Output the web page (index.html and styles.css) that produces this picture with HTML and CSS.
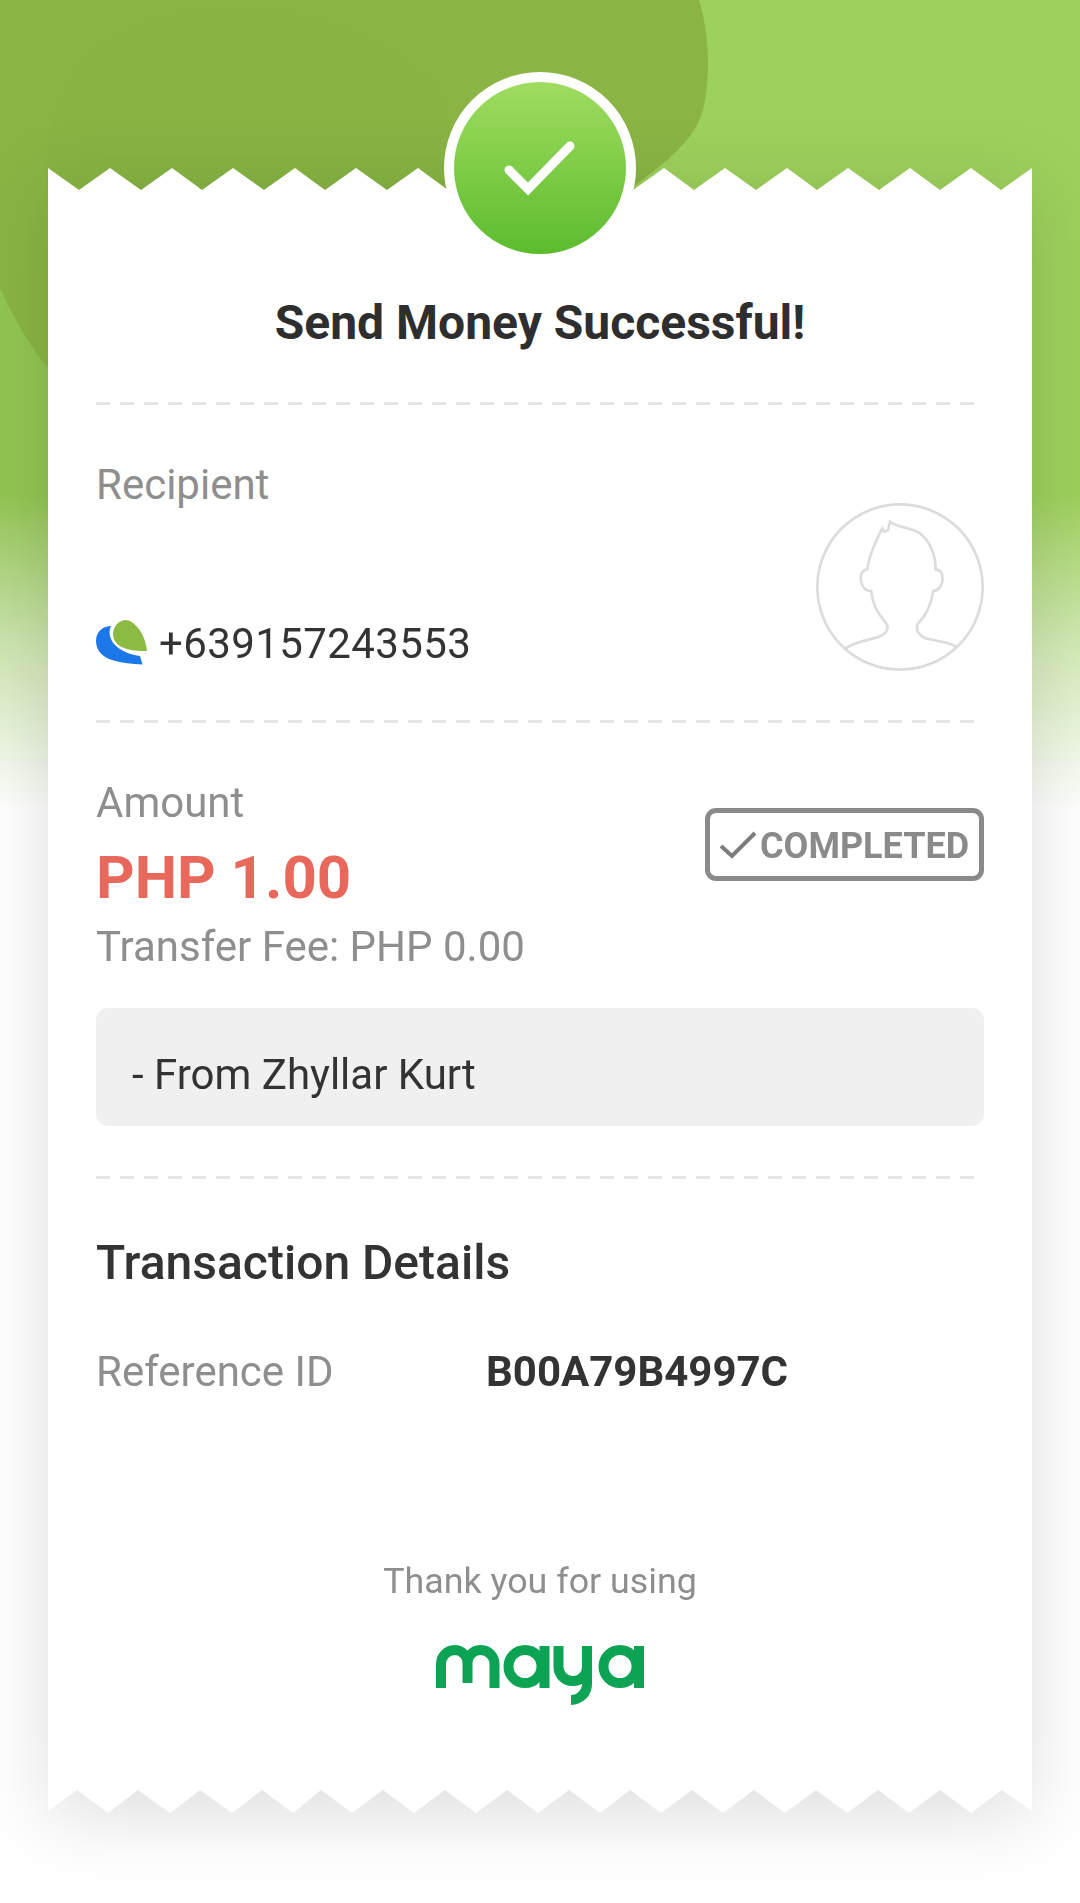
FILE: index.html
```html
<!DOCTYPE html>
<html lang="en">
<head>
<meta charset="utf-8">
<title>Send Money Successful</title>
<link rel="stylesheet" href="styles.css">
</head>
<body>
<main class="page">
  <svg class="backdrop" viewBox="0 0 1080 900" aria-hidden="true">
    <defs>
      <linearGradient id="fade" x1="0" y1="0" x2="0" y2="1">
        <stop offset="0" stop-color="#fff" stop-opacity="0"/>
        <stop offset="0.55" stop-color="#fff" stop-opacity="0"/>
        <stop offset="0.72" stop-color="#fff" stop-opacity="0.55"/>
        <stop offset="0.9" stop-color="#fff" stop-opacity="1"/>
        <stop offset="1" stop-color="#fff" stop-opacity="1"/>
      </linearGradient>
    </defs>
    <rect width="1080" height="900" fill="#9dd05c"/>
    <path d="M0 280H60V900H0Z" fill="#92c552"/>
    <path d="M0 0H699C708 30 712 70 703 110C693 145 660 165 630 190L300 500L48 368C25 340 10 310 0 288Z" fill="#8ab544"/>
    <path d="M46 168C50 110 70 60 110 38C150 15 220 4 270 10C330 18 390 40 440 90L470 200H46Z" fill="#87b443"/>
    <rect width="1080" height="900" fill="url(#fade)"/>
  </svg>

  <div class="receipt-wrap">
    <div class="receipt-shadow">
      <section class="receipt">
        <h1 class="title">Send Money Successful!</h1>
        <div class="dash"></div>

        <div class="recipient">
          <div class="recipient-text">
            <div class="label">Recipient</div>
            <div class="phone-row">
              <svg class="wallet-icon" viewBox="0 0 51 45" aria-hidden="true">
                <path d="M15 6C8 6 0 11 0 21C0 30 6 37 16 40C26 43 36 44 46.500 44.500L44 36C36 35 26 32 19 25C14 20 12 12 15 6Z" fill="#1c78e8"/>
                <path d="M29 0C21 1 17 8 17 14C17 22 23 27 31 29C38 31 45 31 51 31C50 22 47 14 42 8C38 3 34 0 29 0Z" fill="#8bbb42"/>
              </svg>
              <span class="phone">+639157243553</span>
            </div>
          </div>
          <svg class="avatar" viewBox="46 36 504 504" aria-hidden="true">
            <circle cx="298" cy="288" r="248"/>
            <path d="M135 472C165 450 220 445 240 435C262 425 265 405 255 395C225 360 215 335 212 300C190 300 180 280 180 262C180 245 190 235 200 235C205 190 225 150 245 112L250 122L262 118L268 92C290 110 330 110 355 125C385 145 405 190 405 235C420 235 428 250 425 270C422 290 410 300 398 300C392 340 375 375 350 400C345 420 355 430 370 440C400 450 440 450 468 468"/>
          </svg>
        </div>
        <div class="dash"></div>

        <div class="amount">
          <div class="amount-text">
            <div class="label">Amount</div>
            <div class="value">PHP 1.00</div>
            <div class="label">Transfer Fee: PHP 0.00</div>
          </div>
          <div class="status">
            <svg class="status-check" viewBox="0 0 38 28" aria-hidden="true"><path d="M2 15L13 25L36 2"/></svg>
            <span class="status-text">COMPLETED</span>
          </div>
        </div>
        <div class="note">- From Zhyllar Kurt</div>
        <div class="dash"></div>

        <h2 class="details-title">Transaction Details</h2>
        <div class="detail-row">
          <span class="label detail-key">Reference ID</span>
          <span class="detail-value">B00A79B4997C</span>
        </div>

        <footer class="thanks">
          <div class="thanks-text">Thank you for using</div>
          <svg class="maya" viewBox="0 0 208 60" role="img" aria-label="maya">
            <path d="M5 43V19A14 14 0 0 1 18.500 5A13 13 0 0 1 31.500 18V38M31.500 18A13 13 0 0 1 45 5A14 14 0 0 1 58.500 19V43"/>
            <circle cx="89" cy="21.500" r="16.500"/>
            <path d="M108.500 1V43"/>
            <path d="M122.500 1V22A14 14 0 0 0 136.500 36A14 14 0 0 0 151 22V1M151 22V39A16 16 0 0 1 135 55"/>
            <circle cx="184" cy="21.500" r="16.500"/>
            <path d="M203 1V43"/>
          </svg>
        </footer>
      </section>
    </div>
    <div class="check-badge">
      <svg viewBox="0 0 172 172" aria-hidden="true"><path d="M55 88L74 107L116 64"/></svg>
    </div>
  </div>
</main>
</body>
</html>
```

FILE: styles.css
```css
*, *::before, *::after { box-sizing: border-box; margin: 0; padding: 0; }

html, body {
  width: 1080px;
  height: 1903px;
  overflow: hidden;
  background: #fff;
}

body {
  font-family: Roboto, "Liberation Sans", sans-serif;
  color: #333;
}

.page {
  position: relative;
  width: 1080px;
  height: 1903px;
  padding: 168px 48px 0;
}

.backdrop {
  position: absolute;
  left: 0;
  top: 0;
  width: 1080px;
  height: 900px;
}

.receipt-wrap {
  position: relative;
}

.receipt-shadow {
  filter: drop-shadow(0 14px 36px rgba(0, 0, 0, 0.13));
}

.receipt {
  width: 984px;
  height: 1645px;
  padding: 0 48px;
  background: #fff;
  display: flex;
  flex-direction: column;
  clip-path: polygon(
    0 0, 31px 22px, 62px 0, 93px 22px, 124px 0, 154px 22px, 185px 0, 216px 22px,
    247px 0, 277px 22px, 308px 0, 339px 22px, 370px 0, 400px 22px, 431px 0, 462px 22px,
    493px 0, 523px 22px, 554px 0, 585px 22px, 616px 0, 646px 22px, 677px 0, 708px 22px,
    739px 0, 769px 22px, 800px 0, 831px 22px, 862px 0, 892px 22px, 923px 0, 953px 22px, 984px 0,
    984px 1643px,
    954px 1622px, 923px 1645px, 892px 1622px, 861px 1645px, 830px 1622px, 799px 1645px,
    768px 1622px, 737px 1645px, 706px 1622px, 675px 1645px, 644px 1622px, 613px 1645px,
    582px 1622px, 552px 1645px, 521px 1622px, 490px 1645px, 459px 1622px, 428px 1645px,
    397px 1622px, 366px 1645px, 335px 1622px, 304px 1645px, 273px 1622px, 245px 1645px,
    214px 1622px, 184px 1645px, 152px 1622px, 122px 1645px, 90px 1622px, 60px 1645px,
    29px 1622px, 0 1643px
  );
}

.check-badge {
  position: absolute;
  left: 396px;
  top: -96px;
  width: 192px;
  height: 192px;
  border: 10px solid #fff;
  border-radius: 50%;
  background: linear-gradient(180deg, #a0dc60 0%, #5cbc2e 100%);
}

.check-badge svg {
  display: block;
  width: 172px;
  height: 172px;
  fill: none;
  stroke: #fff;
  stroke-width: 9;
  stroke-linecap: round;
}

.title {
  margin-top: 123px;
  font-size: 48px;
  line-height: 64px;
  font-weight: 700;
  text-align: center;
  color: #2e2e2e;
}

.dash {
  height: 3px;
  flex: none;
  margin-right: 8px;
  background: repeating-linear-gradient(90deg, #e6e6e6 0 14px, transparent 14px 24px);
}

.title + .dash { margin-top: 47px; }

.label {
  font-size: 42px;
  line-height: 48px;
  color: #8e8e8e;
}

.recipient {
  display: flex;
  justify-content: space-between;
  height: 315px;
  padding-top: 56px;
}

.recipient-text {
  display: flex;
  flex-direction: column;
}

.phone-row {
  display: flex;
  align-items: center;
  gap: 12px;
  margin-top: 111px;
}

.wallet-icon {
  width: 51px;
  height: 45px;
  flex: none;
  margin-top: -4px;
}

.phone {
  font-size: 42px;
  letter-spacing: 0.4px;
  line-height: 48px;
  color: #333;
}

.avatar {
  width: 168px;
  height: 168px;
  margin-top: 42px;
  flex: none;
  fill: none;
  stroke: #dcdcdc;
  stroke-width: 8;
}

.amount {
  display: flex;
  justify-content: space-between;
  align-items: flex-start;
  padding-top: 56px;
}

.amount-text {
  display: flex;
  flex-direction: column;
}

.value {
  font-size: 60px;
  line-height: 72px;
  font-weight: 700;
  color: #e8695c;
  margin: 15px 0 9px;
}

.status {
  display: flex;
  align-items: center;
  gap: 3px;
  width: 279px;
  height: 73px;
  margin-top: 29px;
  padding: 0 8px 0 9px;
  border: 5px solid #8a8a8a;
  border-radius: 11px;
  font-size: 36px;
  font-weight: 700;
  color: #8a8a8a;
}

.status-text {
  margin-top: 3px;
}

.status-check {
  width: 38px;
  height: 28px;
  flex: none;
  fill: none;
  stroke: #7d7d7d;
  stroke-width: 4;
}

.note {
  margin-top: 37px;
  height: 118px;
  padding: 14px 36px 0;
  display: flex;
  align-items: center;
  background: #f0f0f0;
  border-radius: 12px;
  font-size: 42px;
  color: #333;
}

.note + .dash { margin-top: 50px; }

.details-title {
  margin-top: 56px;
  font-size: 48px;
  line-height: 56px;
  font-weight: 500;
  color: #333;
}

.detail-row {
  display: flex;
  align-items: center;
  margin-top: 57px;
}

.detail-key {
  width: 390px;
}

.detail-value {
  font-size: 42px;
  line-height: 48px;
  font-weight: 700;
  color: #333;
}

.thanks {
  margin-top: 163px;
  display: flex;
  flex-direction: column;
  align-items: center;
}

.thanks-text {
  font-size: 35.800px;
  line-height: 44px;
  color: #8e8e8e;
}

.maya {
  width: 208px;
  height: 60px;
  margin-top: 42px;
}

.maya path,
.maya circle {
  fill: none;
  stroke: #0ca354;
  stroke-width: 10;
}
```
